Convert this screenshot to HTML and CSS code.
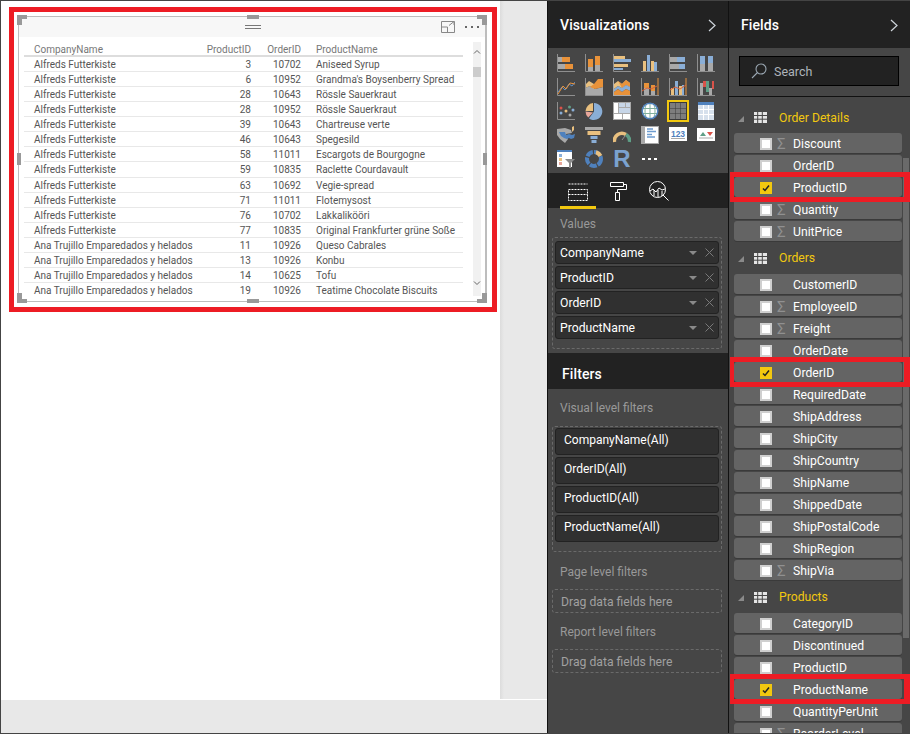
FILE: index.html
```html
<!DOCTYPE html>
<html lang="en">
<head>
<meta charset="utf-8">
<title>Report</title>
<link rel="stylesheet" href="styles.css">
</head>
<body>
<div class="app">
  <main class="report">
    <div class="report-top">
      <div class="page">
        <div class="red-box">
          <section class="visual">
            <span class="handle tl"></span><span class="handle tr"></span><span class="handle bl"></span><span class="handle br"></span>
            <span class="handle-mid top"></span><span class="handle-mid bottom"></span><span class="handle-mid left"></span><span class="handle-mid right"></span>
            <div class="visual-head">
              <span class="grip"></span>
              <svg class="focus" viewBox="0 0 14 12"><path d="M.5 6V.5h13v11H.5V6h6v5.500M8 4.500 13 .5M9.500.5H13V4"/></svg>
              <span class="more"><i></i><i></i><i></i></span>
            </div>
            <div class="table-wrap">
              <div class="table">
                <div class="trow thead"><span>CompanyName</span><span class="num">ProductID</span><span class="num">OrderID</span><span class="name">ProductName</span></div>
                <div class="trow"><span>Alfreds Futterkiste</span><span class="num">3</span><span class="num">10702</span><span class="name">Aniseed Syrup</span></div>
                <div class="trow"><span>Alfreds Futterkiste</span><span class="num">6</span><span class="num">10952</span><span class="name">Grandma's Boysenberry Spread</span></div>
                <div class="trow"><span>Alfreds Futterkiste</span><span class="num">28</span><span class="num">10643</span><span class="name">Rössle Sauerkraut</span></div>
                <div class="trow"><span>Alfreds Futterkiste</span><span class="num">28</span><span class="num">10952</span><span class="name">Rössle Sauerkraut</span></div>
                <div class="trow"><span>Alfreds Futterkiste</span><span class="num">39</span><span class="num">10643</span><span class="name">Chartreuse verte</span></div>
                <div class="trow"><span>Alfreds Futterkiste</span><span class="num">46</span><span class="num">10643</span><span class="name">Spegesild</span></div>
                <div class="trow"><span>Alfreds Futterkiste</span><span class="num">58</span><span class="num">11011</span><span class="name">Escargots de Bourgogne</span></div>
                <div class="trow"><span>Alfreds Futterkiste</span><span class="num">59</span><span class="num">10835</span><span class="name">Raclette Courdavault</span></div>
                <div class="trow"><span>Alfreds Futterkiste</span><span class="num">63</span><span class="num">10692</span><span class="name">Vegie-spread</span></div>
                <div class="trow"><span>Alfreds Futterkiste</span><span class="num">71</span><span class="num">11011</span><span class="name">Flotemysost</span></div>
                <div class="trow"><span>Alfreds Futterkiste</span><span class="num">76</span><span class="num">10702</span><span class="name">Lakkalikööri</span></div>
                <div class="trow"><span>Alfreds Futterkiste</span><span class="num">77</span><span class="num">10835</span><span class="name">Original Frankfurter grüne Soße</span></div>
                <div class="trow"><span>Ana Trujillo Emparedados y helados</span><span class="num">11</span><span class="num">10926</span><span class="name">Queso Cabrales</span></div>
                <div class="trow"><span>Ana Trujillo Emparedados y helados</span><span class="num">13</span><span class="num">10926</span><span class="name">Konbu</span></div>
                <div class="trow"><span>Ana Trujillo Emparedados y helados</span><span class="num">14</span><span class="num">10625</span><span class="name">Tofu</span></div>
                <div class="trow last"><span>Ana Trujillo Emparedados y helados</span><span class="num">19</span><span class="num">10926</span><span class="name">Teatime Chocolate Biscuits</span></div>
              </div>
              <div class="vscroll">
                <svg viewBox="0 0 8 6"><path d="M1 4.500 4 1.500l3 3"/></svg>
                <span class="vthumb"></span>
                <svg class="down" viewBox="0 0 8 6"><path d="M1 1.500 4 4.500l3-3"/></svg>
              </div>
            </div>
          </section>
        </div>
      </div>
      <div class="gutter"></div>
    </div>
    <div class="report-foot"></div>
  </main>

  <aside class="pane viz">
    <header class="pane-head"><h2>Visualizations</h2><svg class="chev" viewBox="0 0 8 13"><path d="M1 1l6 5.500-6 5.500"/></svg></header>
    <div class="gallery">
      <div class="tile"><svg viewBox="0 0 18 18"><path class="ax" d="M.5 0v17.500H18"/><rect class="g" x="1" y="3" width="4" height="5"/><rect class="o" x="5" y="3" width="8" height="5"/><rect class="g" x="1" y="10" width="7" height="5"/><rect class="o" x="8" y="10" width="8" height="5"/></svg></div>
      <div class="tile"><svg viewBox="0 0 18 18"><path class="ax" d="M.5 0v17.500H18"/><rect class="g" x="3" y="13" width="5" height="4"/><rect class="o" x="3" y="5" width="5" height="8"/><rect class="g" x="10" y="11" width="5" height="6"/><rect class="o" x="10" y="2" width="5" height="9"/></svg></div>
      <div class="tile"><svg viewBox="0 0 18 18"><path class="ax" d="M.5 0v17.500H18"/><rect class="t" x="1" y="2" width="11" height="3"/><rect class="b" x="1" y="5" width="17" height="3"/><rect class="t" x="1" y="10" width="14" height="3"/><rect class="b" x="1" y="14" width="9" height="2"/></svg></div>
      <div class="tile"><svg viewBox="0 0 18 18"><path class="ax" d="M0 17.500H18"/><rect class="t" x="2" y="7" width="3" height="10"/><rect class="b" x="6" y="1" width="3" height="16"/><rect class="t" x="10" y="7" width="3" height="10"/><rect class="b" x="13" y="8" width="3" height="9"/></svg></div>
      <div class="tile"><svg viewBox="0 0 18 18"><path class="ax" d="M.5 0v17.500H18"/><rect class="g" x="1" y="3" width="7" height="5"/><rect class="b" x="8" y="3" width="8" height="5"/><rect class="g" x="1" y="10" width="9" height="5"/><rect class="b" x="10" y="10" width="6" height="5"/></svg></div>
      <div class="tile"><svg viewBox="0 0 18 18"><path class="ax" d="M.5 0v17.500H18"/><rect class="g" x="3" y="10" width="5" height="7"/><rect class="b" x="3" y="2" width="5" height="8"/><rect class="g" x="11" y="9" width="5" height="8"/><rect class="b" x="11" y="2" width="5" height="7"/></svg></div>

      <div class="tile"><svg viewBox="0 0 18 18"><path class="ax" d="M.5 0v17.500H18"/><path class="lb" d="M1 14l4-5 3 3 4-6 3 2 3-4"/><path class="lo" d="M1 16l5-8 3 3 4-6 5 1"/></svg></div>
      <div class="tile"><svg viewBox="0 0 18 18"><path class="g" d="M0 17.500V10l5-2 5 3 8-2v8.500z"/><path class="t" d="M0 10V7l4-4 5 3v5l-4-3z"/><path class="o" d="M5 9l4-3 4-5h5v8l-8 2z"/><path class="ax" d="M.5 0v17.500H18"/></svg></div>
      <div class="tile"><svg viewBox="0 0 18 18"><rect class="g" x="0" y="0" width="1" height="18"/><rect class="g" x="0" y="17" width="18" height="1"/><path class="t" d="M1 6l4-3 4 3 4-4 4 3v4l-4-2-4 3-4-2-4 3z"/><path class="o" d="M5 3l4 3 4-4 4 3v4l-4-2-4 3z"/><path class="b" d="M1 11l4-3 4 2 4-3 4 2v4l-4-2-4 3-4-3-4 3z"/><path class="o" d="M1 14l4-3 4 3 4-3 4 2v4H1z"/></svg></div>
      <div class="tile"><svg viewBox="0 0 18 18"><path class="ax" d="M.5 0v17.500H18"/><rect class="g" x="3" y="10" width="5" height="7"/><rect class="o" x="3" y="5" width="5" height="5"/><rect class="g" x="10" y="13" width="4" height="4"/><rect class="o" x="10" y="7" width="4" height="6"/><rect class="o" x="16.500" y="0" width="1" height="17"/><path class="lr" d="M1 13l5-3 4 1 6-3"/></svg></div>
      <div class="tile"><svg viewBox="0 0 18 18"><path class="ax" d="M.5 0v17.500H18"/><rect class="t" x="2" y="10" width="3" height="7"/><rect class="b" x="6" y="3" width="3" height="14"/><rect class="t" x="10" y="8" width="3" height="9"/><rect class="b" x="13" y="7" width="2" height="10"/><rect class="o" x="16.500" y="0" width="1" height="17"/><path class="lr" d="M1 12l5-3 5 2 6-4"/></svg></div>
      <div class="tile"><svg viewBox="0 0 18 18"><path class="ax" d="M.5 0v17.500H18"/><rect class="g" x="3" y="5" width="3" height="12"/><rect class="r" x="6" y="3" width="3" height="6"/><rect class="gr" x="9" y="3" width="3" height="11"/><rect class="g" x="12" y="10" width="3" height="7"/><rect class="r" x="15" y="3" width="2" height="8"/></svg></div>

      <div class="tile"><svg viewBox="0 0 18 18"><path class="ax" d="M.5 0v17.500H18"/><circle class="r" cx="4" cy="6" r="1.500"/><circle class="t" cx="9" cy="9" r="1.500"/><circle class="gr" cx="12.500" cy="5" r="1.500"/><circle class="b" cx="4" cy="11" r="1.500"/><circle class="g" cx="13" cy="13" r="1.500"/><circle class="b" cx="16" cy="8" r="1.500"/></svg></div>
      <div class="tile"><svg viewBox="0 0 18 18"><path class="b" d="M9 1a8.500 8.500 0 1 1-5 15.500L9 9.500z"/><path class="p" d="M8 10.500l-4.800 5A8.500 8.500 0 0 1 .5 9.500z"/><path class="t" d="M8 9H.5A8.500 8.500 0 0 1 8 1z"/></svg></div>
      <div class="tile"><svg viewBox="0 0 18 18"><rect class="g" width="18" height="18"/><rect class="w" x="1" y="1" width="4" height="10"/><rect class="lt" x="6" y="1" width="6" height="4"/><rect class="lt" x="13" y="1" width="4" height="4"/><rect class="lt" x="6" y="6" width="11" height="5"/><rect class="w" x="1" y="12" width="8" height="5"/><rect class="w" x="10" y="12" width="7" height="5"/></svg></div>
      <div class="tile"><svg viewBox="0 0 18 18"><circle class="w" cx="9" cy="9" r="8"/><path class="lg" d="M1.500 6.500h15M1.500 11.500h15M9 1v16M5.500 2c-2 4-2 10 0 14M12.500 2c2 4 2 10 0 14"/><circle class="ring" cx="9" cy="9" r="7.800"/></svg></div>
      <div class="tile sel"><svg viewBox="0 0 18 18"><rect class="dk" width="18" height="18"/><rect class="m" x="1" y="1" width="5" height="5"/><rect class="m" x="6.500" y="1" width="5" height="5"/><rect class="m" x="12" y="1" width="5" height="5"/><rect class="m" x="1" y="6.500" width="5" height="5"/><rect class="m" x="6.500" y="6.500" width="5" height="5"/><rect class="m" x="12" y="6.500" width="5" height="5"/><rect class="m" x="1" y="12" width="5" height="5"/><rect class="m" x="6.500" y="12" width="5" height="5"/><rect class="m" x="12" y="12" width="5" height="5"/></svg></div>
      <div class="tile"><svg viewBox="0 0 18 18"><rect class="lt2" x="1" width="16" height="18"/><rect class="bd" x="1" width="16" height="3"/><path class="gap" d="M1 7.500h16M1 12.500h16M6.500 3v15M11.500 3v15"/></svg></div>

      <div class="tile"><svg viewBox="0 0 18 18"><path class="g" d="M0 3l8-1 6 2 1 3-6 1 2 5-3 4-5-4-3-4z"/><path class="bd" d="M2 6l6 0 1 3 3-1 3 1 3-1-1 4-3 1-2-1-2 1-3-1-3-2z"/><path class="t" d="M15 1l2-1v4l-2 2z"/></svg></div>
      <div class="tile"><svg viewBox="0 0 18 18"><rect class="g" y="1" width="18" height="3"/><rect class="t" x="2.500" y="5" width="13" height="4"/><rect class="b" x="5.500" y="10" width="7" height="3"/><rect class="b" x="6.500" y="14" width="5" height="3"/></svg></div>
      <div class="tile"><svg viewBox="0 0 18 18"><path class="arc-t" d="M1.500 16A7.500 7.500 0 0 1 13 8.500"/><path class="arc-g" d="M13 8.500A7.500 7.500 0 0 1 16.500 16"/><path class="ax" d="M9 14l3-4"/></svg></div>
      <div class="tile"><svg viewBox="0 0 18 18"><rect class="g" width="18" height="18"/><rect class="w" x="1" y="1" width="16" height="16"/><rect class="g" x="1" y="1" width="3" height="16"/><path class="lb2" d="M6 3h6M6 5.500h9M6 8.500h5M6 11h8"/></svg></div>
      <div class="tile"><svg viewBox="0 0 18 18"><rect class="w" y="1" width="18" height="14"/><text class="t123" x="9" y="10.500">123</text><rect class="g" x="2" y="12" width="14" height="1"/></svg></div>
      <div class="tile"><svg viewBox="0 0 18 18"><rect class="w" y="2" width="18" height="13"/><path class="gr" d="M3 10l3-4 3 4z"/><path class="r" d="M10 6h6l-3 4z"/><rect class="g" x="2" y="11.500" width="14" height="1"/></svg></div>

      <div class="tile"><svg viewBox="0 0 18 18"><rect class="w" width="15" height="17"/><rect class="bd" width="15" height="2"/><rect class="b" x="2" y="4" width="3" height="3"/><rect class="t" x="2" y="8" width="3" height="3"/><rect class="p" x="2" y="12" width="3" height="3"/><path class="fn" d="M8 9h10l-4 4v5h-2v-5z"/></svg></div>
      <div class="tile"><svg viewBox="0 0 18 18"><circle class="donut" cx="9" cy="9" r="7"/><path class="donut-t" d="M11 2.300a7 7 0 0 1 4.500 3.700"/></svg></div>
      <div class="tile"><span class="r-mark">R</span></div>
      <div class="tile"><span class="dots"><i></i><i></i><i></i></span></div>
    </div>
    <nav class="tabs">
      <a class="tab on"><svg viewBox="0 0 20 18"><rect class="ds" x=".5" y="6.500" width="19" height="11"/><path class="ds" d="M.5 1h19M.5 11.500h19"/></svg></a>
      <a class="tab"><svg viewBox="0 0 20 20"><path class="st" d="M1.500 1.500h13v4h-13zM14.500 3.500h3v5H8.500v3M6.500 11.500h4v8h-4z"/></svg></a>
      <a class="tab"><svg viewBox="0 0 20 20"><circle class="st" cx="8.500" cy="8.500" r="8"/><path class="st" d="M14 14l5.500 5.500M1 10l3-2 3 3 3-4 3 2 3-1M5 9v6M9 9v7M13 10v5"/></svg></a>
    </nav>
    <section class="values">
      <h3 class="label">Values</h3>
      <div class="drop">
        <div class="pill"><span>CompanyName</span><i class="caret"></i><svg class="x" viewBox="0 0 9 9"><path d="M.500.500l8 8M8.500.500l-8 8"/></svg></div>
        <div class="pill"><span>ProductID</span><i class="caret"></i><svg class="x" viewBox="0 0 9 9"><path d="M.500.500l8 8M8.500.500l-8 8"/></svg></div>
        <div class="pill"><span>OrderID</span><i class="caret"></i><svg class="x" viewBox="0 0 9 9"><path d="M.500.500l8 8M8.500.500l-8 8"/></svg></div>
        <div class="pill"><span>ProductName</span><i class="caret"></i><svg class="x" viewBox="0 0 9 9"><path d="M.500.500l8 8M8.500.500l-8 8"/></svg></div>
      </div>
    </section>
    <header class="filters-head"><h2>Filters</h2></header>
    <section class="filters">
      <h3 class="label">Visual level filters</h3>
      <div class="drop drop-f">
        <div class="fpill">CompanyName(All)</div>
        <div class="fpill">OrderID(All)</div>
        <div class="fpill">ProductID(All)</div>
        <div class="fpill">ProductName(All)</div>
      </div>
      <h3 class="label l2">Page level filters</h3>
      <div class="drop empty">Drag data fields here</div>
      <h3 class="label l3">Report level filters</h3>
      <div class="drop empty">Drag data fields here</div>
    </section>
  </aside>

  <aside class="pane fields">
    <header class="pane-head"><h2>Fields</h2><svg class="chev" viewBox="0 0 8 13"><path d="M1 1l6 5.500-6 5.500"/></svg></header>
    <div class="search-wrap">
      <div class="search"><svg viewBox="0 0 16 16"><circle cx="10" cy="6" r="5"/><path d="M6.500 9.500 1 15"/></svg><span>Search</span></div>
    </div>
    <div class="list">
      <span class="list-thumb"></span>
      <div class="group group-first"><i class="tri"></i><svg class="tbl" viewBox="0 0 13 11"><path d="M0 0h13v11H0z"/><path class="cut" d="M0 3.500h13M0 7.200h13M3.700 0v11M8.300 0v11"/></svg><span>Order Details</span></div>
      <div class="field"><i class="cb"></i><i class="sig">Σ</i><span>Discount</span></div>
      <div class="field"><i class="cb"></i><i class="sig"></i><span>OrderID</span></div>
      <div class="field marked"><i class="cb on"><svg viewBox="0 0 12 12"><path d="M3 6.500l2 2 4-5"/></svg></i><i class="sig"></i><span>ProductID</span></div>
      <div class="field"><i class="cb"></i><i class="sig">Σ</i><span>Quantity</span></div>
      <div class="field"><i class="cb"></i><i class="sig">Σ</i><span>UnitPrice</span></div>
      <div class="group"><i class="tri"></i><svg class="tbl" viewBox="0 0 13 11"><path d="M0 0h13v11H0z"/><path class="cut" d="M0 3.500h13M0 7.200h13M3.700 0v11M8.300 0v11"/></svg><span>Orders</span></div>
      <div class="field"><i class="cb"></i><i class="sig"></i><span>CustomerID</span></div>
      <div class="field"><i class="cb"></i><i class="sig">Σ</i><span>EmployeeID</span></div>
      <div class="field"><i class="cb"></i><i class="sig">Σ</i><span>Freight</span></div>
      <div class="field"><i class="cb"></i><i class="sig"></i><span>OrderDate</span></div>
      <div class="field marked"><i class="cb on"><svg viewBox="0 0 12 12"><path d="M3 6.500l2 2 4-5"/></svg></i><i class="sig"></i><span>OrderID</span></div>
      <div class="field"><i class="cb"></i><i class="sig"></i><span>RequiredDate</span></div>
      <div class="field"><i class="cb"></i><i class="sig"></i><span>ShipAddress</span></div>
      <div class="field"><i class="cb"></i><i class="sig"></i><span>ShipCity</span></div>
      <div class="field"><i class="cb"></i><i class="sig"></i><span>ShipCountry</span></div>
      <div class="field"><i class="cb"></i><i class="sig"></i><span>ShipName</span></div>
      <div class="field"><i class="cb"></i><i class="sig"></i><span>ShippedDate</span></div>
      <div class="field"><i class="cb"></i><i class="sig"></i><span>ShipPostalCode</span></div>
      <div class="field"><i class="cb"></i><i class="sig"></i><span>ShipRegion</span></div>
      <div class="field"><i class="cb"></i><i class="sig">Σ</i><span>ShipVia</span></div>
      <div class="group"><i class="tri"></i><svg class="tbl" viewBox="0 0 13 11"><path d="M0 0h13v11H0z"/><path class="cut" d="M0 3.500h13M0 7.200h13M3.700 0v11M8.300 0v11"/></svg><span>Products</span></div>
      <div class="field"><i class="cb"></i><i class="sig"></i><span>CategoryID</span></div>
      <div class="field"><i class="cb"></i><i class="sig"></i><span>Discontinued</span></div>
      <div class="field"><i class="cb"></i><i class="sig"></i><span>ProductID</span></div>
      <div class="field marked"><i class="cb on"><svg viewBox="0 0 12 12"><path d="M3 6.500l2 2 4-5"/></svg></i><i class="sig"></i><span>ProductName</span></div>
      <div class="field"><i class="cb"></i><i class="sig"></i><span>QuantityPerUnit</span></div>
      <div class="field"><i class="cb"></i><i class="sig">Σ</i><span>ReorderLevel</span></div>
    </div>
  </aside>
</div>
</body>
</html>
```
FILE: styles.css
```css
* { box-sizing: border-box; }
html, body { margin: 0; padding: 0; }
body { width: 910px; height: 734px; overflow: hidden; font-family: Roboto, "Open Sans", sans-serif; background: #e8e8e8; }
h2, h3 { margin: 0; font-weight: 400; }
i { font-style: normal; display: block; }

.app { display: flex; width: 910px; height: 734px; border-top: 1px solid #444; border-bottom: 1px solid #444; }

/* report canvas */
.report { width: 547px; flex: none; display: flex; flex-direction: column; border-left: 1px solid #444; }
.report-top { display: flex; height: 698px; flex: none; }
.page { width: 499px; flex: none; background: #fff; padding: 6px 0 0 8px; }
.gutter { flex: 1; background: linear-gradient(90deg, #dcdcdc 0, #e8e8e8 4px); }
.report-foot { flex: 1; background: #e8e8e8; border-top: 1px solid #fff; }

.red-box { width: 488px; height: 305px; border: 5px solid #ed1c24; padding: 4px 0 0 4px; }
.visual { position: relative; width: 469px; height: 286px; border: 1px solid #bdbdbd; border-right-width: 2px; background: #fff; }
.visual-head { height: 20px; background: #f7f7f7; position: relative; display: flex; align-items: center; justify-content: flex-end; padding-right: 6px; }
.grip { position: absolute; left: 226px; top: 8px; width: 16px; height: 4px; border-top: 1px solid #777; border-bottom: 1px solid #777; }
.focus { width: 14px; height: 12px; margin-right: 10px; fill: none; stroke: #888; stroke-width: 1; }
.more { display: flex; gap: 4px; }
.more i { width: 2px; height: 2px; background: #666; }

.handle { position: absolute; width: 10px; height: 10px; z-index: 2; border: 0 solid #999; }
.handle.tl { left: -2px; top: -2px; border-width: 4px 0 0 5px; }
.handle.tr { right: -2px; top: -2px; border-width: 4px 5px 0 0; }
.handle.bl { left: -2px; bottom: -2px; border-width: 0 0 4px 5px; }
.handle.br { right: -2px; bottom: -2px; border-width: 0 5px 4px 0; }
.handle-mid { position: absolute; background: #999; z-index: 2; }
.handle-mid.top { left: 228px; top: -2px; width: 12px; height: 4px; }
.handle-mid.bottom { left: 228px; bottom: -2px; width: 12px; height: 4px; }
.handle-mid.left { left: -2px; top: 136px; width: 4px; height: 12px; }
.handle-mid.right { right: -2px; top: 136px; width: 4px; height: 12px; }

.table-wrap { position: relative; padding: 5px 0 0 5px; }
.table { width: 439px; }
.trow { display: grid; grid-template-columns: 167px 50px 50px 1fr; height: 15.07px; padding-left: 10px; border-bottom: 1px solid #e8e8e8; font-size: 10px; line-height: 16px; color: #555; white-space: nowrap; }
.trow.thead { height: 15px; border-bottom: 2px solid #ddd; color: #777; line-height: 15px; }
.trow.last { border-bottom: 0; }
.num { text-align: right; }
.name { padding-left: 15px; }
.vscroll { position: absolute; left: 454px; top: 5px; width: 8px; height: 254px; background: #f1f1f1; }
.vscroll svg { position: absolute; left: 0; top: 7px; width: 8px; height: 6px; fill: none; stroke: #666; stroke-width: 1; }
.vscroll svg.down { top: auto; bottom: 10px; }
.vthumb { position: absolute; left: 0; top: 25px; width: 8px; height: 10px; background: #ccc; }

/* panes */
.pane { flex: none; background: #464646; border-left: 1px solid #111; color: #fff; }
.viz { width: 181px; display: flex; flex-direction: column; }
.fields { width: 182px; display: flex; flex-direction: column; overflow: hidden; }
.pane-head { height: 47px; flex: none; background: #222; display: flex; align-items: center; justify-content: space-between; padding: 1px 12px 0 12px; }
.pane-head h2 { font-size: 14px; font-weight: 500; letter-spacing: .1px; }
.chev { width: 8px; height: 13px; fill: none; stroke: #cfd6dc; stroke-width: 1.200; }

.gallery { display: grid; grid-template-columns: repeat(6, 28px); grid-auto-rows: 24px; height: 125px; flex: none; padding: 6px 0 0 9px; }
.tile { width: 18px; height: 18px; }
.tile svg { display: block; width: 18px; height: 18px; }
.tile.sel { outline: 2px solid #f2c80f; outline-offset: 0; }
.ax { fill: none; stroke: #8f8f8f; stroke-width: 1; }
.g { fill: #a9a9a9; } .o { fill: #e8923a; } .b { fill: #8aaed6; } .t { fill: #e9c07f; } .w { fill: #fff; }
.r { fill: #d9534a; } .gr { fill: #5f9e86; } .p { fill: #e8a79c; } .lt { fill: #c7d6e8; } .bd { fill: #4f81bd; }
.dk { fill: #3a3a3a; } .m { fill: #7d7d7d; } .lt2 { fill: #d6e0ec; } .fn { fill: #8a8a8a; }
.lb { fill: none; stroke: #5f8fc7; stroke-width: 1; } .lo { fill: none; stroke: #e8923a; stroke-width: 1; } .lr { fill: none; stroke: #d9633a; stroke-width: 1; }
.lg { fill: none; stroke: #7fae9c; stroke-width: 1; } .ring { fill: none; stroke: #4f81bd; stroke-width: 1.500; }
.gap { fill: none; stroke: #fff; stroke-width: 1; }
.arc-t { fill: none; stroke: #e9c07f; stroke-width: 3.500; } .arc-g { fill: none; stroke: #5f9e86; stroke-width: 3.500; }
.lb2 { fill: none; stroke: #6d9ccf; stroke-width: 1.500; }
.t123 { font: 700 8.500px "Liberation Sans", sans-serif; fill: #4f81bd; text-anchor: middle; }
.donut { fill: none; stroke: #4f81bd; stroke-width: 4; stroke-dasharray: 7 1.200; }
.donut-t { fill: none; stroke: #e9c07f; stroke-width: 4; }
.r-mark { display: block; font: 700 24px/18px "Liberation Sans", sans-serif; color: #7ba2cf; text-align: center; }
.dots { display: flex; gap: 3px; padding-top: 8px; padding-left: 1px; }
.dots i { width: 3px; height: 2px; background: #fff; }

.tabs { height: 35px; flex: none; background: #222; display: flex; gap: 19px; padding-left: 12px; }
.tab { display: block; width: 36px; height: 36px; padding: 9px 8px 0; }
.tab + .tab { width: 22px; padding: 8px 0 0; margin-left: -6px; }
.tab + .tab + .tab { margin-left: -1px; }
.tab.on { border-bottom: 3px solid #f2c80f; }
.tab svg { display: block; width: 20px; height: 20px; }
.st { fill: none; stroke: #fff; stroke-width: 1; }
.ds { fill: none; stroke: #fff; stroke-width: 1; stroke-dasharray: 2 1; }

.label { font-size: 12px; line-height: 16px; color: #999; padding-left: 11px; }
.values { height: 145px; flex: none; padding: 8px 0 0 4px; }
.values .label { padding-left: 8px; height: 21px; }
.drop { width: 170px; border: 1px dashed #6a6a6a; border-radius: 3px; }
.values .drop { height: 112px; padding: 3px 2px; display: flex; flex-direction: column; gap: 2px; }
.pill { height: 23px; display: flex; align-items: center; padding: 0 4px; background: #303030; border: 1px solid #222; border-radius: 3px; font-size: 12.200px; color: #fff; }
.pill span { flex: 1; }
.caret { width: 0; height: 0; border: 4px solid transparent; border-top-color: #8a8a8a; border-bottom: 0; margin-right: 8px; }
.x { width: 9px; height: 9px; fill: none; stroke: #7a7a7a; stroke-width: 1; }

.filters-head { height: 36px; flex: none; background: #222; display: flex; align-items: center; padding: 6px 0 0 14px; }
.filters-head h2 { font-size: 14px; font-weight: 500; letter-spacing: .1px; }
.filters { flex: 1; padding: 11px 0 0 4px; }
.filters .label { padding-left: 8px; height: 25px; }
.drop-f { height: 126px; padding: 1px 2px; display: flex; flex-direction: column; gap: 2px; margin-top: 1px; }
.fpill { height: 27px; padding: 3px 8px; background: #303030; border: 1px solid #222; border-radius: 3px; font-size: 12px; line-height: 17px; color: #fff; }
.filters .l2 { margin-top: 12px; }
.filters .l3 { margin-top: 11px; }
.empty { height: 24px; font-size: 12.200px; line-height: 24px; color: #a0a0a0; padding-left: 8px; }

/* fields */
.search-wrap { height: 49px; flex: none; padding: 8px 0 0 10px; border-bottom: 1px solid #111; }
.search { width: 160px; height: 30px; background: #222; border: 1px solid #000; display: flex; align-items: center; padding-left: 11px; gap: 7px; font-size: 12.500px; color: #aeb4ba; }
.search svg { width: 16px; height: 16px; fill: none; stroke: #9aa7b2; stroke-width: 1.100; }
.list { position: relative; flex: 1; padding: 6px 0 0 5px; overflow: hidden; background: #464646; }
.list-thumb { position: absolute; left: 174px; top: 61px; width: 6px; height: 480px; background: #6a6a6a; }
.group { height: 31px; display: flex; align-items: center; padding-bottom: 1px; font-size: 12.200px; color: #f2c80f; }
.group-first { height: 30px; }
.tri { width: 0; height: 0; margin: 2px 10px 0 4px; border-style: solid; border-width: 0 0 6px 6px; border-color: transparent transparent #8a8a8a transparent; }
.tbl { width: 13px; height: 11px; margin-right: 12px; fill: #e6e6e6; stroke: none; }
.tbl .cut { fill: none; stroke: #464646; stroke-width: 1; }
.field { position: relative; width: 168px; height: 20px; margin-bottom: 2px; background: #646464; border-radius: 3px; box-shadow: 0 1px 0 #3a3a3a; display: flex; align-items: center; padding: 1px 0 0 26px; font-size: 12.200px; color: #fff; }
.cb { width: 12px; height: 12px; background: #fff; border: 2px solid #cfcfcf; flex: none; }
.cb.on { background: #f2c80f; border-color: #f2c80f; }
.cb svg { display: block; width: 12px; height: 12px; margin: -2px; fill: none; stroke: #222; stroke-width: 1.500; }
.sig { width: 21px; padding-left: 5px; color: #909090; font-size: 15px; line-height: 16px; flex: none; }
.field.marked::after { content: ""; position: absolute; z-index: 1; left: -4px; top: -5px; right: -8px; bottom: -5px; border: 5px solid #ed1c24; border-left-width: 4px; border-right-width: 6px; }
```
